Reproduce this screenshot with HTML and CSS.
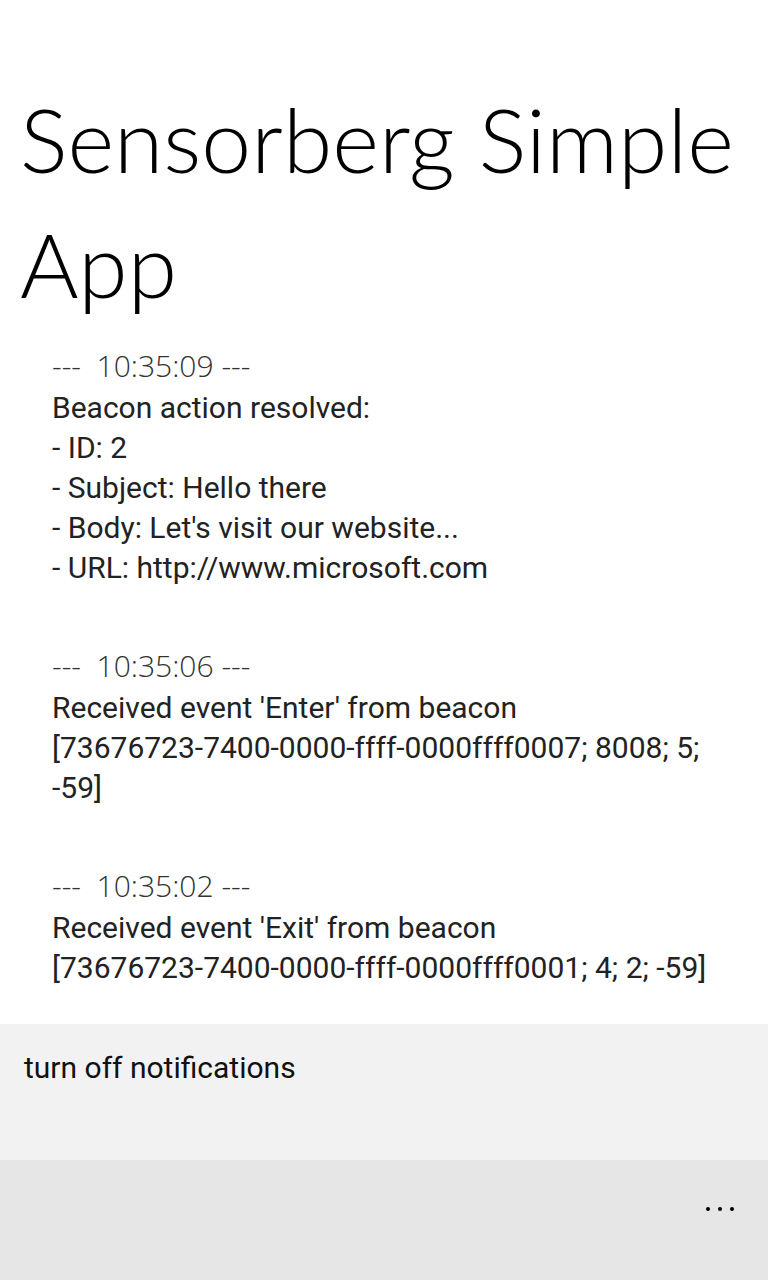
FILE: index.html
```html
<!DOCTYPE html>
<html lang="en">
<head>
<meta charset="utf-8">
<title>Sensorberg Simple App</title>
<link rel="stylesheet" href="styles.css">
</head>
<body>
<div class="page">
  <main class="content">
    <h1 class="title">Sensorberg Simple App</h1>
    <div class="log">
      <div class="entry">
        <div class="stamp">---&nbsp;&nbsp;10:35:09 ---</div>
        <div class="line">Beacon action resolved:</div>
        <div class="line">- ID: 2</div>
        <div class="line">- Subject: Hello there</div>
        <div class="line">- Body: Let's visit our website...</div>
        <div class="line">- URL: http://www.microsoft.com</div>
      </div>
      <div class="entry">
        <div class="stamp">---&nbsp;&nbsp;10:35:06 ---</div>
        <div class="line">Received event 'Enter' from beacon <span class="nw">[73676723-7400-0000-ffff-0000ffff0007;</span> 8008; 5; <span class="nw">-59]</span></div>
      </div>
      <div class="entry">
        <div class="stamp">---&nbsp;&nbsp;10:35:02 ---</div>
        <div class="line">Received event 'Exit' from beacon <span class="nw">[73676723-7400-0000-ffff-0000ffff0001;</span> 4; 2; <span class="nw">-59]</span></div>
      </div>
    </div>
  </main>
  <section class="panel">
    <div class="panel-item">turn off notifications</div>
  </section>
  <footer class="appbar">
    <div class="more"><span class="dot"></span><span class="dot"></span><span class="dot"></span></div>
  </footer>
</div>
</body>
</html>
```
FILE: styles.css
```css
html, body {
  margin: 0;
  padding: 0;
  background: #ffffff;
}
body {
  font-family: Roboto, "Open Sans", sans-serif;
  color: #1f1f1f;
}
.page {
  width: 768px;
  height: 1280px;
  display: flex;
  flex-direction: column;
  overflow: hidden;
}
.content {
  flex: 1 1 auto;
  min-height: 0;
  overflow: hidden;
  padding: 76px 0 0 0;
}
.title {
  margin: 0;
  padding: 0 20px 0 20px;
  font-family: Lato, "Open Sans", sans-serif;
  font-size: 89.5px;
  line-height: 125px;
  font-weight: 300;
  color: #000;
}
.log {
  padding: 18px 52px 0 52px;
}
.entry {
  margin-bottom: 56px;
}
.entry:last-child {
  margin-bottom: 0;
}
.stamp {
  font-family: "Open Sans", Roboto, sans-serif;
  font-size: 30px;
  line-height: 44px;
  font-weight: 300;
  color: #333;
}
.line {
  font-size: 30px;
  line-height: 40px;
  font-weight: 400;
  color: #222;
}
.nw {
  white-space: nowrap;
}
.panel {
  flex: 0 0 136px;
  background: #f2f2f2;
  box-sizing: border-box;
  padding: 24px 24px 0 24px;
}
.panel-item {
  font-size: 30px;
  line-height: 40px;
  color: #111;
}
.appbar {
  flex: 0 0 120px;
  background: #e6e6e6;
  display: flex;
  justify-content: flex-end;
  align-items: flex-start;
  box-sizing: border-box;
  padding: 47px 34px 0 0;
}
.more {
  display: flex;
  gap: 8px;
}
.dot {
  width: 4px;
  height: 4px;
  border-radius: 50%;
  background: #000;
}
```
